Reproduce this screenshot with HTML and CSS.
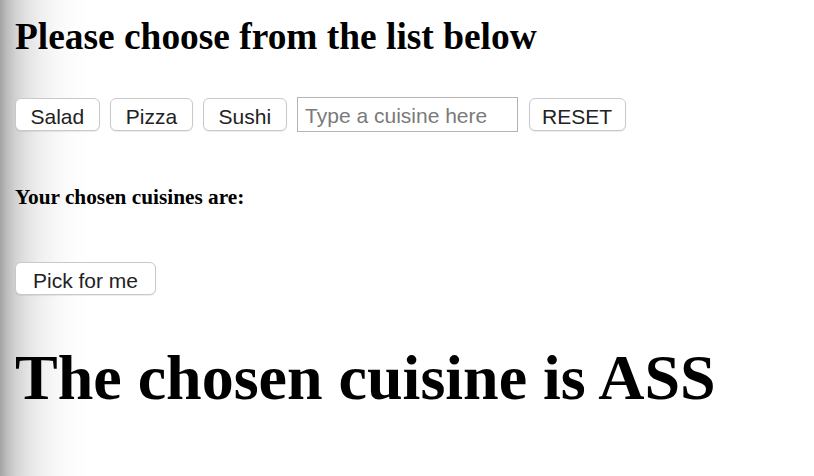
FILE: index.html
```html
<!DOCTYPE html>
<html lang="en">
<head>
<meta charset="utf-8">
<title>Cuisine picker</title>
<link rel="stylesheet" href="styles.css">
</head>
<body>
<main class="page">
  <h2 class="title">Please choose from the list below</h2>
  <div class="choices">
    <button class="btn">Salad</button>
    <button class="btn">Pizza</button>
    <button class="btn">Sushi</button>
    <input class="cuisine-input" type="text" placeholder="Type a cuisine here">
    <button class="btn btn-reset">RESET</button>
  </div>
  <h5 class="subtitle">Your chosen cuisines are:</h5>
  <div class="pick-row">
    <button class="btn btn-pick">Pick for me</button>
  </div>
  <h1 class="result">The chosen cuisine is ASS</h1>
</main>
</body>
</html>
```

FILE: styles.css
```css
html, body {
  margin: 0;
  padding: 0;
  height: 100%;
}

body {
  background: linear-gradient(to right, #a3a3a3 0px, #bdbdbd 7px, #d3d3d3 16px, #e3e3e3 27px, #efefef 40px, #f7f7f7 55px, #fcfcfc 70px, #ffffff 88px);
  color: #000;
  font-family: "Liberation Serif", "Times New Roman", serif;
}

.page {
  padding: 0 15px;
}

.title {
  margin: 16px 0 0;
  font-size: 37.4px;
  line-height: 42px;
  font-weight: bold;
}

.choices {
  margin-top: 39px;
  display: flex;
  align-items: center;
  gap: 10.5px;
  height: 35px;
}

.btn {
  box-sizing: border-box;
  height: 33px;
  padding: 3px 14.5px 0;
  margin: 0;
  border: 1px solid #c9c9c9;
  border-radius: 6px;
  background: #fff;
  box-shadow: 0 1px 1px rgba(0, 0, 0, 0.08);
  color: #222;
  font-family: "Liberation Sans", Arial, sans-serif;
  font-size: 21px;
  line-height: 1;
}

.btn-reset {
  padding: 3px 12.5px 0;
}

.btn-pick {
  padding: 3px 17px 0;
}

.cuisine-input {
  box-sizing: border-box;
  width: 221px;
  height: 35px;
  margin: 0;
  padding: 3px 7px 0;
  border: 1px solid #b4b4b4;
  border-radius: 0;
  background: #fff;
  font-family: "Liberation Sans", Arial, sans-serif;
  font-size: 21px;
  color: #222;
}

.cuisine-input::placeholder {
  color: #7a7a7a;
}

.subtitle {
  margin: 53px 0 0;
  font-size: 21.3px;
  line-height: 24px;
  font-weight: bold;
}

.pick-row {
  margin-top: 53px;
  display: flex;
}

.result {
  margin: 46px 0 0;
  font-size: 64px;
  line-height: 74px;
  font-weight: bold;
}
```
